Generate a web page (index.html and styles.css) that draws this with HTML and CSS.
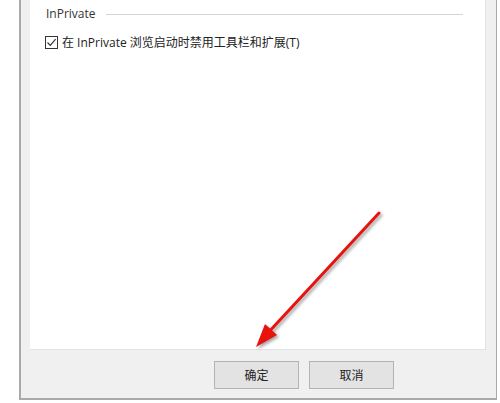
FILE: index.html
```html
<!DOCTYPE html>
<html lang="zh-CN">
<head>
<meta charset="utf-8">
<title>InPrivate</title>
<link rel="stylesheet" href="styles.css">
</head>
<body>
<div class="window">
  <div class="panel">
    <div class="group-head">
      <span class="group-label">InPrivate</span>
      <span class="group-line"></span>
    </div>
    <label class="check-row">
      <span class="checkbox">
        <svg width="11" height="11" viewBox="0 0 11 11"><path d="M1.5 5.5 L4.3 8.4 L9.6 2.2" fill="none" stroke="#333" stroke-width="1.2"/></svg>
      </span>
      <span class="check-text">在 InPrivate 浏览启动时禁用工具栏和扩展(T)</span>
    </label>
  </div>
  <div class="buttons">
    <button class="btn">确定</button>
    <button class="btn">取消</button>
  </div>
</div>
<svg class="arrow" width="500" height="403" viewBox="0 0 500 403">
  <g class="arrow-shape">
    <line x1="379" y1="213" x2="266" y2="335" stroke="#e8120f" stroke-width="3" stroke-linecap="round"/>
    <polygon points="256,347 277,335 265,324" fill="#e8120f"/>
  </g>
</svg>
</body>
</html>
```
FILE: styles.css
```css
html, body {
  margin: 0;
  padding: 0;
  background: #ffffff;
  width: 500px;
  height: 403px;
  overflow: hidden;
  font-family: "Open Sans", "Noto Sans CJK SC", sans-serif;
  font-size: 12px;
  color: #262626;
}

.window {
  margin-left: 19px;
  width: 478px;
  height: 400px;
  box-sizing: border-box;
  border: 2px solid #a9a9a9;
  border-top: none;
  border-right-width: 1px;
  background: #f0f0f0;
  padding-left: 9px;
  padding-right: 10px;
}

.panel {
  height: 350px;
  box-sizing: border-box;
  background: #ffffff;
  border-right: 1px solid #e2e2e2;
  border-bottom: 1px solid #e2e2e2;
  padding-left: 15px;
  padding-top: 6px;
}

.group-head {
  display: flex;
  align-items: center;
  height: 16px;
  padding-left: 1px;
}

.group-label {
  line-height: 16px;
  color: #333333;
}

.group-line {
  flex: 1;
  height: 1px;
  background: #d4d4d4;
  margin-left: 10px;
  margin-right: 22px;
}

.check-row {
  display: flex;
  align-items: center;
  margin-top: 14px;
  height: 13px;
}

.checkbox {
  width: 13px;
  height: 13px;
  box-sizing: border-box;
  border: 1px solid #333333;
  background: #ffffff;
  display: flex;
  align-items: center;
  justify-content: center;
}

.check-text {
  margin-left: 4px;
  line-height: 16px;
  color: #222222;
  white-space: nowrap;
}

.buttons {
  display: flex;
  gap: 10px;
  padding-left: 184px;
  padding-top: 11px;
}

.btn {
  width: 85px;
  height: 28px;
  box-sizing: border-box;
  border: 1px solid #b3b3b3;
  background: #e3e3e3;
  font-family: "Open Sans", "Noto Sans CJK SC", sans-serif;
  font-size: 12px;
  color: #222222;
  padding: 0;
}

.arrow {
  position: absolute;
  left: 0;
  top: 0;
  pointer-events: none;
}

.arrow-shape {
  filter: drop-shadow(2px 2px 1.5px rgba(0, 0, 0, 0.35));
}
```
